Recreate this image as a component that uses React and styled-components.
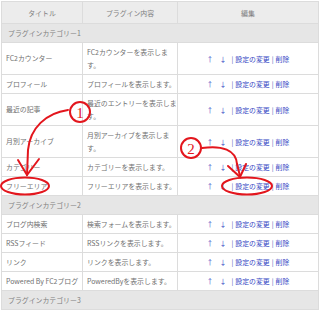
import React from "react";
import styled, { createGlobalStyle } from "styled-components";

const Global = createGlobalStyle`
  html, body {
    margin: 0;
    padding: 0;
    background: #fff;
  }
  body {
    font-family: "Noto Sans CJK JP", "Liberation Sans", sans-serif;
  }
`;

const Wrap = styled.div`
  position: relative;
  width: 320px;
  height: 313px;
  overflow: hidden;
`;

const Table = styled.table`
  margin: 1px 0 0 1px;
  width: 318px;
  border-collapse: collapse;
  table-layout: fixed;
  border: 1px solid #d8d8d8;
  font-size: 6.9px;
  color: #707070;
`;

const Head = styled.th`
  height: 21px;
  padding: 0;
  background: #ececec;
  border: 1px solid #dcdcdc;
  font-weight: normal;
  text-align: center;
  color: #808080;
`;

const Category = styled.td`
  height: 18px;
  padding: 0 0 0 6px;
  background: #e6e6e6;
  border: 1px solid #dcdcdc;
  color: #808080;
`;

const Cell = styled.td`
  height: ${(p) => (p.tall ? 31 : 18)}px;
  padding: 0 0 0 4px;
  border: 1px solid #dcdcdc;
  line-height: 13px;
  white-space: nowrap;
  overflow: hidden;
  vertical-align: middle;
`;

const EditCell = styled.td`
  border: 1px solid #dcdcdc;
  text-align: center;
  padding: 0;
  white-space: nowrap;
`;

const Link = styled.span`
  color: #3447c4;
`;

const Sep = styled.span`
  color: #4a58b8;
  margin: 0 2px;
`;

const Overlay = styled.svg`
  position: absolute;
  left: 0;
  top: 0;
  pointer-events: none;
`;

const groups = [
  {
    name: "プラグインカテゴリー1",
    items: [
      ["FC2カウンター", ["FC2カウンターを表示しま", "す。"]],
      ["プロフィール", ["プロフィールを表示します。"]],
      ["最近の記事", ["最近のエントリーを表示しま", "す。"]],
      ["月別アーカイブ", ["月別アーカイブを表示しま", "す。"]],
      ["カテゴリー", ["カテゴリーを表示します。"]],
      ["フリーエリア", ["フリーエリアを表示します。"]],
    ],
  },
  {
    name: "プラグインカテゴリー2",
    items: [
      ["ブログ内検索", ["検索フォームを表示します。"]],
      ["RSSフィード", ["RSSリンクを表示します。"]],
      ["リンク", ["リンクを表示します。"]],
      ["Powered By FC2ブログ", ["PoweredByを表示します。"]],
    ],
  },
  { name: "プラグインカテゴリー3", items: [] },
];

const Edit = () => (
  <EditCell>
    <Link>↑</Link>
    <Link style={{ marginLeft: 6 }}>↓</Link>
    <Sep style={{ marginLeft: 5 }}>|</Sep>
    <Link>設定の変更</Link>
    <Sep>|</Sep>
    <Link>削除</Link>
  </EditCell>
);

const Marks = () => (
  <Overlay width="320" height="313" viewBox="0 0 320 313">
    <g fill="none" stroke="#e3161d" strokeWidth="2" strokeLinecap="round">
      <circle cx="80" cy="112" r="10" />
      <path d="M68 110 C46 113 30 128 28 150 L27 175" />
      <path d="M18 160 L27 175 L39 159" />
      <ellipse cx="25" cy="186" rx="24" ry="8.5" />
      <circle cx="191" cy="148" r="10" />
      <path d="M202 148 C222 145 236 150 237 164 L240 176" />
      <path d="M228 166 L240 177 L246 164" />
      <ellipse cx="247" cy="186" rx="25" ry="8.5" />
    </g>
    <g fill="#e3161d" fontFamily="Liberation Serif, serif" fontSize="15" textAnchor="middle">
      <text x="80" y="117.5">1</text>
      <text x="191" y="153.5">2</text>
    </g>
  </Overlay>
);

const App = () => (
  <Wrap>
    <Global />
    <Table>
      <colgroup>
        <col style={{ width: 81 }} />
        <col style={{ width: 95 }} />
        <col />
      </colgroup>
      <thead>
        <tr>
          <Head>タイトル</Head>
          <Head>プラグイン内容</Head>
          <Head>編集</Head>
        </tr>
      </thead>
      <tbody>
        {groups.map((g) => (
          <React.Fragment key={g.name}>
            <tr>
              <Category colSpan={3}>{g.name}</Category>
            </tr>
            {g.items.map(([title, desc]) => (
              <tr key={title}>
                <Cell tall={desc.length > 1}>{title}</Cell>
                <Cell tall={desc.length > 1}>
                  {desc.map((line, i) => (
                    <React.Fragment key={i}>
                      {i > 0 && <br />}
                      {line}
                    </React.Fragment>
                  ))}
                </Cell>
                <Edit />
              </tr>
            ))}
          </React.Fragment>
        ))}
      </tbody>
    </Table>
    <Marks />
  </Wrap>
);

export default App;
